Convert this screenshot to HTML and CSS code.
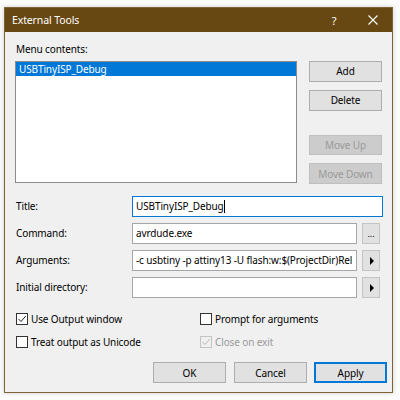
FILE: index.html
```html
<!DOCTYPE html>
<html>
<head>
<meta charset="utf-8">
<link rel="stylesheet" href="styles.css">
</head>
<body>
<div class="window">
  <div class="titlebar">
    <span class="title">External Tools</span>
    <span class="help">?</span>
    <span class="close"><svg width="10" height="10" viewBox="0 0 10 10"><path d="M0.5 0.5 L9.5 9.5 M9.5 0.5 L0.5 9.5" stroke="#fff" stroke-width="1.1" fill="none"/></svg></span>
  </div>
  <div class="body">
    <div class="caption">Menu contents:</div>
    <div class="top">
      <div class="list">
        <div class="item selected">USBTinyISP_Debug</div>
      </div>
      <div class="side">
        <div class="btn">Add</div>
        <div class="btn">Delete</div>
        <div class="btn disabled spaced">Move Up</div>
        <div class="btn disabled">Move Down</div>
      </div>
    </div>
    <div class="form">
      <div class="label">Title:</div>
      <div class="input focused wide">USBTinyISP_Debug<span class="caret"></span></div>

      <div class="label">Command:</div>
      <div class="input">avrdude.exe</div>
      <div class="small-btn">...</div>

      <div class="label">Arguments:</div>
      <div class="input">-c usbtiny -p attiny13 -U flash:w:$(ProjectDir)Rel</div>
      <div class="small-btn"><span class="arrow"></span></div>

      <div class="label">Initial directory:</div>
      <div class="input"></div>
      <div class="small-btn"><span class="arrow"></span></div>
    </div>
    <div class="checks">
      <div class="check"><span class="box"><svg width="10" height="10" viewBox="0 0 10 10"><path d="M1.5 5 L4 7.5 L8.8 2" stroke="#222" stroke-width="1" fill="none"/></svg></span>Use Output window</div>
      <div class="check"><span class="box"></span>Prompt for arguments</div>
      <div class="check"><span class="box"></span>Treat output as Unicode</div>
      <div class="check disabled"><span class="box"><svg width="10" height="10" viewBox="0 0 10 10"><path d="M1.5 5 L4 7.5 L8.8 2" stroke="#b8b8b8" stroke-width="1" fill="none"/></svg></span>Close on exit</div>
    </div>
    <div class="actions">
      <div class="btn">OK</div>
      <div class="btn">Cancel</div>
      <div class="btn default">Apply</div>
    </div>
  </div>
</div>
</body>
</html>
```
FILE: styles.css
```css
* { box-sizing: border-box; }
html, body { margin: 0; padding: 0; background: #fcfcfc; }
body {
  font-family: "Noto Sans", "Open Sans", sans-serif;
  font-size: 10px;
  letter-spacing: -0.12px;
  color: #000;
  width: 400px;
  height: 400px;
  overflow: hidden;
}
.window {
  margin: 7px 0 0 4px;
  width: 389px;
  height: 386px;
  border: 1px solid #7e6232;
  background: #f0f0f0;
  box-shadow: 0 0 5px rgba(0,0,0,0.18);
  display: flex;
  flex-direction: column;
}
.titlebar {
  height: 24px;
  background: #674812;
  color: #fff;
  display: flex;
  align-items: center;
  padding-left: 7px;
  flex: none;
}
.title { flex: 1; font-size: 10.5px; }
.help { width: 16px; text-align: center; margin-right: 26px; font-size: 11px; }
.close { width: 10px; height: 10px; margin-right: 14px; display: flex; }
.body {
  flex: 1;
  padding: 10px 10px 0 10px;
  display: flex;
  flex-direction: column;
}
.caption { height: 15px; line-height: 15px; padding-left: 1px; margin-bottom: 4px; }
.top { display: flex; gap: 12px; height: 123px; }
.list {
  width: 282px;
  height: 122px;
  background: #fff;
  border: 1px solid #8c8c8c;
  padding: 0;
}
.item { height: 14px; line-height: 14px; padding-left: 3px; }
.item.selected { background: #0078d7; color: #fff; }
.side { display: flex; flex-direction: column; gap: 8px; }
.btn {
  width: 73px;
  height: 21px;
  background: #e1e1e1;
  border: 1px solid #adadad;
  display: flex;
  align-items: center;
  justify-content: center;
}
.btn.disabled { background: #cccccc; border-color: #bfbfbf; color: #9a9a9a; }
.btn.spaced { margin-top: 16px; }
.btn.default { border: 2px solid #0078d7; }
.form {
  margin-top: 12px;
  display: grid;
  grid-template-columns: 112px 225px 18px;
  column-gap: 5px;
  grid-auto-rows: 21px;
  row-gap: 6px;
}
.label { grid-column: 1; padding-left: 1px; padding-top: 3px; line-height: 14px; white-space: nowrap; }
.input {
  grid-column: 2;
  background: #fff;
  border: 1px solid #a6a6a6;
  padding-left: 3px;
  line-height: 19px;
  white-space: nowrap;
  overflow: hidden;
}
.input.wide { grid-column: 2 / 4; margin-right: -3px; }
.input.focused { border-color: #0078d7; }
.caret { display: inline-block; width: 1px; height: 13px; background: #000; vertical-align: -3px; }
.small-btn {
  grid-column: 3;
  background: #e1e1e1;
  border: 1px solid #c4c4c4;
  display: flex;
  align-items: center;
  justify-content: center;
  font-size: 9px;
  line-height: 1;
}
.arrow {
  width: 0; height: 0;
  border-top: 4px solid transparent;
  border-bottom: 4px solid transparent;
  border-left: 4px solid #000;
  margin-left: 1px;
}
.checks {
  margin-top: 13px;
  display: grid;
  grid-template-columns: 184px 1fr;
  grid-auto-rows: 16px;
  row-gap: 7px;
}
.check { display: flex; align-items: center; padding-left: 1px; }
.box {
  width: 12px; height: 12px;
  border: 1px solid #333;
  background: #fff;
  margin-right: 3px;
  display: flex; align-items: center; justify-content: center;
}
.check.disabled { color: #9a9a9a; }
.check.disabled .box { border-color: #c4c4c4; background: #f0f0f0; }
.actions {
  margin-top: 12px;
  margin-right: -5px;
  display: flex;
  justify-content: flex-end;
  gap: 7px;
}
.actions .btn:first-child { margin-right: 1px; }
.actions .btn { height: 21px; }
```
